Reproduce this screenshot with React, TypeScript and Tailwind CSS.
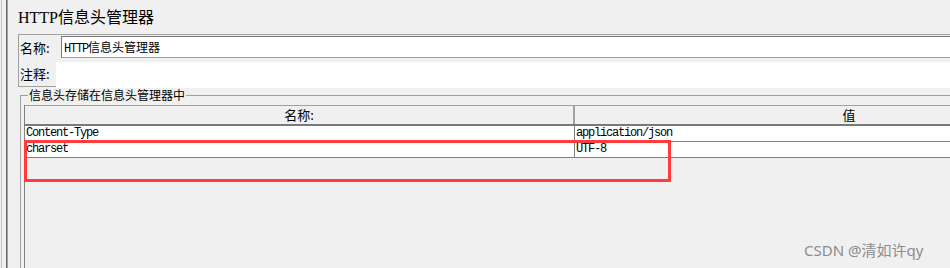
import React from "react";

const rows = [
  { name: "Content-Type", value: "application/json" },
  { name: "charset", value: "UTF-8" },
];

export default function App() {
  return (
    <div className="relative w-[950px] h-[268px] overflow-hidden bg-[#f0f0f0] flex text-black font-['Noto_Sans_CJK_SC',sans-serif]">
      {/* window edge */}
      <div className="flex shrink-0">
        <div className="w-px" />
        <div className="w-px bg-[#c4c4c4]" />
        <div className="w-[4px]" />
        <div className="w-px bg-[#696969]" />
        <div className="w-px bg-[#a0a0a0]" />
      </div>

      <div className="pl-[10px] w-[1200px] shrink-0 flex flex-col">
        {/* title */}
        <div className="shrink-0 h-[34px] pt-[8px] text-[16px] leading-[20px] font-['Liberation_Serif','Noto_Sans_CJK_SC',serif]">
          HTTP信息头管理器
        </div>

        {/* name / comment box */}
        <div className="shrink-0 h-[53px] border border-[#a0a0a0] flex flex-col">
          <div className="h-[23px] flex">
            <div className="w-[42px] pl-[1px] text-[13px] leading-[23px] pt-[1px]">名称:</div>
            <div className="flex-1 mt-[1px] h-[22px] bg-white border border-[#a0a0a0] border-t-[#7a7a7a] border-l-[#7a7a7a] pl-[2px] leading-[20px] text-[12px]">
              <span className="font-['Liberation_Mono',monospace] text-[12px] tracking-[-1.2px]">HTTP</span>
              <span>信息头管理器</span>
            </div>
          </div>
          <div className="flex-1 flex">
            <div className="w-[37px] pl-[1px] text-[13px] leading-[28px] pt-[2px]">注释:</div>
            <div className="flex-1 mt-[4px] bg-white" />
          </div>
        </div>

        {/* headers fieldset */}
        <fieldset className="shrink-0 mt-[1px] ml-[2px] h-[200px] border border-[#a0a0a0] pl-[3px] pt-[3px] min-w-0">
          <legend className="ml-[4px] px-[1px] text-[12px] leading-[14px]">信息头存储在信息头管理器中</legend>
          <div className="h-[200px] border-l border-[#808080] flex flex-col">
            <div className="shrink-0 flex h-[21px] border-t border-[#a0a0a0] border-b-2 border-b-[#7a7a7a]">
              <div className="w-[550px] border-r-2 border-r-[#a0a0a0] text-center text-[13px] leading-[18px]">名称:</div>
              <div className="w-[548px] text-center text-[13px] leading-[18px]">值</div>
            </div>
            {rows.map((r) => (
              <div key={r.name} className="shrink-0 flex h-[16px] bg-white border-b border-[#808080] font-['Liberation_Mono',monospace] text-[12px] tracking-[-1.2px] leading-[15px]">
                <div className="w-[550px] border-r border-[#808080] pl-[1px]">{r.name}</div>
                <div className="w-[548px] pl-[1px]">{r.value}</div>
              </div>
            ))}
            <div className="flex-1" />
          </div>
        </fieldset>
      </div>

      {/* annotation */}
      <div className="absolute left-[24px] top-[140px] w-[647px] h-[42px] border-[3px] border-[#ff3b3b]" />

      {/* watermark */}
      <div className="absolute left-[804px] top-[240px] text-[15px] leading-[20px] text-[#8c8c8c] font-['Noto_Sans','Noto_Sans_CJK_SC',sans-serif]">
        CSDN @清如许qy
      </div>
    </div>
  );
}
